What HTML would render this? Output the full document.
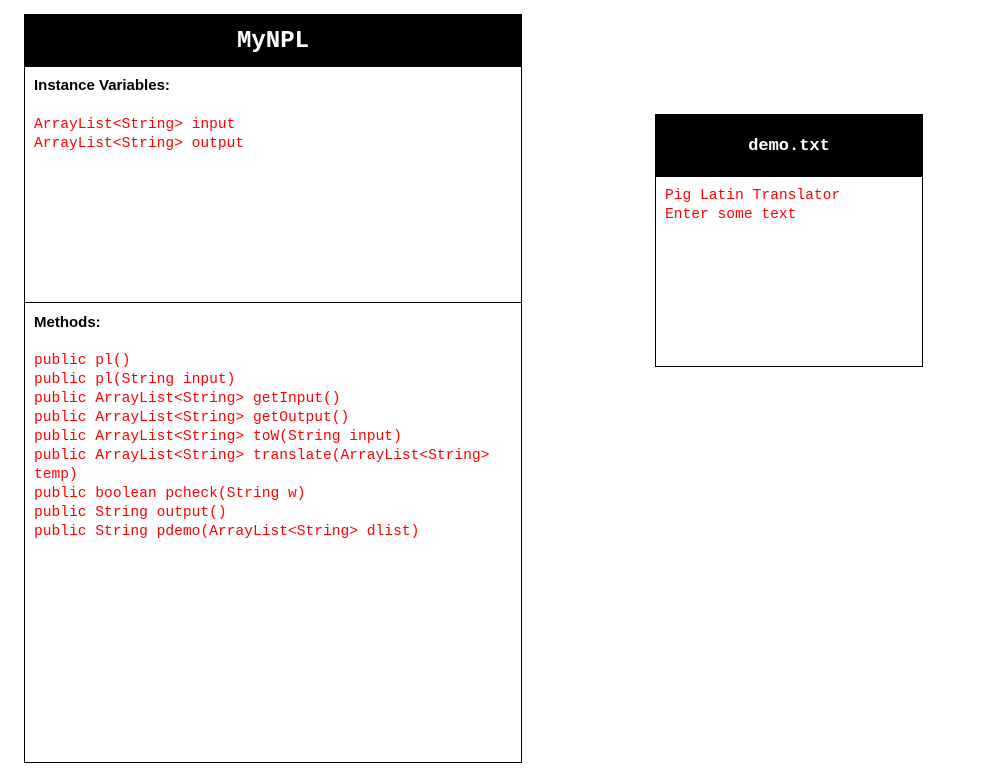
<!DOCTYPE html>
<html><head><meta charset="utf-8"><style>
body{margin:0;background:#fff;width:988px;height:777px;position:relative;overflow:hidden}
.box{position:absolute;border:1px solid #000;box-sizing:border-box;background:#fff}
.hd{background:#000;color:#fff;font-family:"Liberation Mono",monospace;font-weight:bold;text-align:center}
.lbl{position:absolute;left:9px;font-family:"Liberation Sans",sans-serif;font-weight:bold;font-size:15px;color:#000}
.code{position:absolute;left:9px;font-family:"Liberation Mono",monospace;font-size:14.6px;line-height:19px;color:#f00;white-space:pre}
</style></head><body>
<div class="box" style="left:24px;top:14px;width:498px;height:749px">
 <div class="hd" style="height:52px;line-height:54px;font-size:24px">MyNPL</div>
 <div class="lbl" style="top:62px">Instance Variables:</div>
 <div class="code" style="top:101px">ArrayList&lt;String&gt; input
ArrayList&lt;String&gt; output</div>
 <div style="position:absolute;left:0;right:0;top:287px;border-top:1px solid #000"></div>
 <div class="lbl" style="top:299px">Methods:</div>
 <div class="code" style="top:337px">public pl()
public pl(String input)
public ArrayList&lt;String&gt; getInput()
public ArrayList&lt;String&gt; getOutput()
public ArrayList&lt;String&gt; toW(String input)
public ArrayList&lt;String&gt; translate(ArrayList&lt;String&gt;
temp)
public boolean pcheck(String w)
public String output()
public String pdemo(ArrayList&lt;String&gt; dlist)</div>
</div>
<div class="box" style="left:655px;top:114px;width:268px;height:253px">
 <div class="hd" style="height:62px;line-height:64px;font-size:17px">demo.txt</div>
 <div class="code" style="top:72px">Pig Latin Translator
Enter some text</div>
</div>
</body></html>
